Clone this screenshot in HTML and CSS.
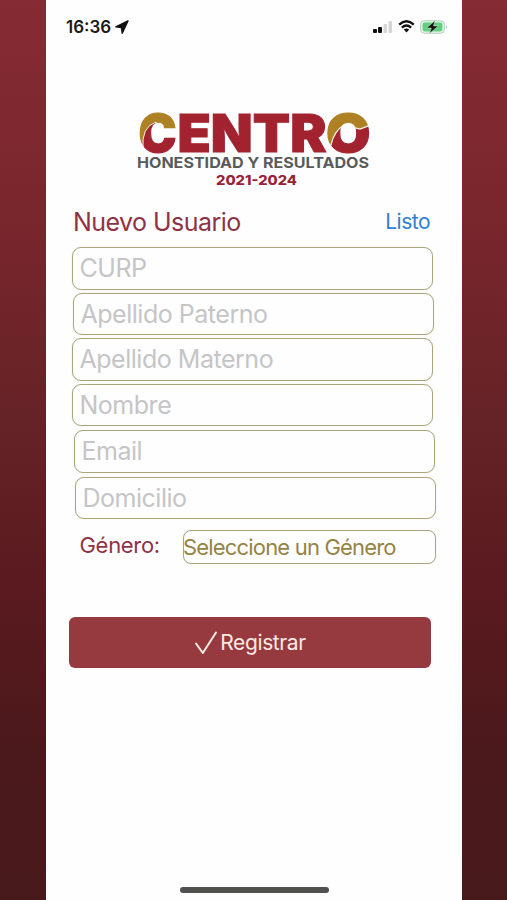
FILE: index.html
```html
<!DOCTYPE html>
<html lang="es">
<head>
    <meta charset="UTF-8">
    <meta name="viewport" content="width=device-width, initial-scale=1.0">
    <title>Nuevo Usuario</title>
    <link rel="stylesheet" href="styles.css">
</head>
<body>

    <div class="phone">
        <!-- Status bar -->
        <div class="status-bar">
            <span class="time">16:36</span>
            <svg class="location" width="14" height="14" viewBox="0 0 14 14">
                <path d="M13 1 L0.8 6.8 L6.4 7.6 L7.2 13.2 Z" fill="#111" stroke="#111" stroke-width="1.4" stroke-linejoin="round"/>
            </svg>
            <div class="status-icons">
                <svg width="20" height="14" viewBox="0 0 20 14">
                    <rect x="0" y="9" width="4" height="4" rx="1" fill="#111"/>
                    <rect x="5" y="7" width="4" height="6" rx="1" fill="#111"/>
                    <rect x="10.5" y="4" width="3.5" height="9" rx="1" fill="#d5d5d5"/>
                    <rect x="15.5" y="1" width="3.5" height="12" rx="1" fill="#d5d5d5"/>
                </svg>
                <svg width="17" height="13" viewBox="0 0 17 13">
                    <path d="M1.2 4.6 Q8.5 -2 15.8 4.6" fill="none" stroke="#111" stroke-width="2.4"/>
                    <path d="M3.9 7.6 Q8.5 3.4 13.1 7.6" fill="none" stroke="#111" stroke-width="2.3"/>
                    <path d="M5.8 9.6 Q8.5 7.3 11.2 9.6 L8.5 12.6 Z" fill="#111"/>
                </svg>
                <svg width="28" height="14" viewBox="0 0 28 14">
                    <rect x="0.5" y="0.7" width="24" height="12.6" rx="4" fill="#e0f5e5" stroke="#b5d3bc"/>
                    <rect x="2.5" y="2.6" width="20" height="8.8" rx="2.4" fill="#60d080"/>
                    <path d="M26 5 Q28 7 26 9 Z" fill="#b0c8b4"/>
                    <path d="M15.2 0.4 L6.6 8 H11.3 L9.4 13.6 L18.4 5.9 H13.5 Z" fill="#111" stroke="#e0f5e5" stroke-width="0.5"/>
                </svg>
            </div>
        </div>

        <!-- Logo -->
        <svg class="logo" width="240" height="80" viewBox="0 0 240 80">
            <defs>
                <!-- two-tone fills for the first and last letter -->
                <pattern id="toneC" patternUnits="userSpaceOnUse" x="0" y="0" width="240" height="80">
                    <rect width="240" height="80" fill="#a2232f"/>
                    <path d="M-2 -2 H46 V21 L22 21 V12 Q7 17 9 39 L-2 36 Z" fill="#ad8124" stroke="#fdf3e8" stroke-width="1"/>
                </pattern>
                <pattern id="toneO" patternUnits="userSpaceOnUse" x="0" y="0" width="240" height="80">
                    <rect width="240" height="80" fill="#a2232f"/>
                    <path d="M188 -2 H242 V13 L226 19 L210 15 Q200 21 197 35 L188 40 Z" fill="#ad8124" stroke="#fdf3e8" stroke-width="1.2"/>
                </pattern>
            </defs>
            <g class="logo-title">
                <text class="tone-c" x="4.5" y="42.3" textLength="38" lengthAdjust="spacingAndGlyphs">C</text>
                <text class="mid" x="43.5" y="42.3" textLength="149" lengthAdjust="spacingAndGlyphs">ENTR</text>
                <text class="tone-o" x="192" y="42.3" textLength="44.5" lengthAdjust="spacingAndGlyphs">O</text>
            </g>
            <text class="logo-sub" x="3" y="57.6" textLength="232" lengthAdjust="spacingAndGlyphs">HONESTIDAD Y RESULTADOS</text>
            <text class="logo-years" x="82" y="75" textLength="81" lengthAdjust="spacingAndGlyphs">2021-2024</text>
        </svg>

        <div class="form-header">
            <h1>Nuevo Usuario</h1>
            <a class="done">Listo</a>
        </div>

        <form class="user-form">
            <input type="text" class="field" placeholder="CURP">
            <input type="text" class="field shift-1" placeholder="Apellido Paterno">
            <input type="text" class="field" placeholder="Apellido Materno">
            <input type="text" class="field" placeholder="Nombre">
            <input type="text" class="field shift-2" placeholder="Email">
            <input type="text" class="field shift-3" placeholder="Domicilio">

            <div class="gender-row">
                <label>Género:</label>
                <div class="gender-select"><span>Seleccione un Género</span></div>
            </div>

            <button type="button" class="register">
                <svg width="24" height="26" viewBox="0 0 24 26">
                    <path d="M2 13.5 L8.8 23 L22 2.5" fill="none" stroke="#fbe9e4" stroke-width="2" stroke-linecap="round" stroke-linejoin="round"/>
                </svg>
                <span>Registrar</span>
            </button>
        </form>

        <div class="home-bar"></div>
    </div>

</body>
</html>
```
FILE: styles.css
```css
body {
    margin: 0;
    height: 900px;
    font-family: Inter, "Liberation Sans", sans-serif;
    background: linear-gradient(#852b33 0%, #7b262d 22%, #662327 46%, #5b1a1f 64%, #4b191b 84%, #48191b 100%);
    overflow: hidden;
}

.phone {
    width: 416px;
    height: 900px;
    margin-left: 46px;
    background-color: #fefefe;
    display: flex;
    flex-direction: column;
    box-sizing: border-box;
}

.status-bar {
    height: 53px;
    padding: 0 14px 0 20px;
    display: flex;
    align-items: center;
    box-sizing: border-box;
}

.time {
    font-size: 17px;
    font-weight: 600;
    color: #1a1a1a;
}

.location {
    margin-left: 4px;
}

.status-icons {
    margin-left: auto;
    display: flex;
    align-items: center;
    gap: 5px;
}

.logo {
    margin: 57px 0 0 88px;
    flex: none;
    overflow: visible;
}

.logo-title {
    font-size: 52.5px;
    font-weight: 900;
    fill: #a2232f;
}

.mid {
    stroke: #a2232f;
    stroke-width: 1;
}

.tone-c {
    fill: url(#toneC);
    stroke: url(#toneC);
    stroke-width: 1.2;
}

.tone-o {
    fill: url(#toneO);
    stroke: url(#toneO);
    stroke-width: 1.2;
}

.logo-sub {
    font-size: 14.8px;
    font-weight: 700;
    fill: #595a5c;
}

.logo-years {
    font-size: 13.5px;
    font-weight: 800;
    fill: #98223a;
}

.form-header {
    display: flex;
    justify-content: space-between;
    align-items: center;
    height: 30px;
    margin: 17px 32px 0 27px;
}

h1 {
    margin: 0;
    font-size: 25px;
    font-weight: 400;
    letter-spacing: -0.55px;
    color: #8d3345;
}

.done {
    margin-top: -2px;
    font-size: 21px;
    letter-spacing: -0.5px;
    color: #2f7fd2;
}

.user-form {
    display: flex;
    flex-direction: column;
    margin: 10px 0 0 25.5px;
}

.field {
    width: 361px;
    height: 42.5px;
    margin: 0 0 3px;
    padding: 0 7px;
    box-sizing: border-box;
    border: 1.5px solid #aaa67c;
    border-radius: 9px;
    background: transparent;
    font-family: inherit;
    font-size: 25px;
    letter-spacing: -0.48px;
    box-shadow: 0 0 1px #c9c5a5;
}

.field::placeholder {
    color: #c5c5c7;
    opacity: 1;
}

.shift-1 {
    margin-left: 1px;
}

.shift-2 {
    margin-top: 1px;
    margin-left: 2px;
}

.shift-3 {
    margin-top: 1px;
    margin-left: 3px;
}

.gender-row {
    display: flex;
    align-items: center;
    margin-top: 8px;
    padding-left: 8px;
    font-size: 22px;
}

.gender-row label {
    width: 103.5px;
    margin-top: -5px;
    letter-spacing: -0.3px;
    color: #8d3345;
}

.gender-select {
    width: 252.5px;
    height: 34px;
    box-sizing: border-box;
    border: 1.5px solid #a9a283;
    border-radius: 8px;
    box-shadow: 0 0 1px #c9c5a5;
    line-height: 32px;
    letter-spacing: -0.82px;
    color: #948343;
    white-space: nowrap;
}

.gender-select span {
    margin-left: -1px;
}

.register {
    width: 362px;
    height: 51px;
    margin: 53px 0 0 -2.5px;
    padding: 0;
    display: flex;
    justify-content: center;
    align-items: center;
    gap: 2px;
    border: none;
    border-radius: 6px;
    background-color: #963a3f;
    color: #fbe9e4;
    font-family: inherit;
    font-size: 21px;
    letter-spacing: -0.4px;
}

.home-bar {
    width: 149px;
    height: 6px;
    margin: auto auto 7px 134px;
    border-radius: 3px;
    background-color: #50504f;
}
```
